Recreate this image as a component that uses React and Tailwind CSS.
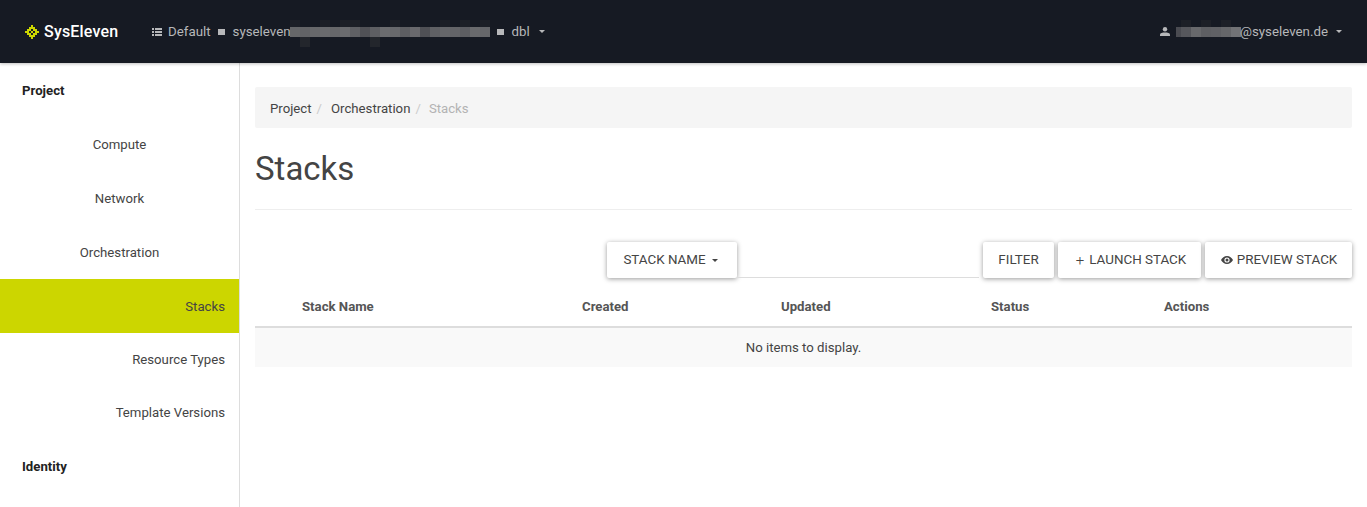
const roboto = "font-['Roboto',sans-serif]";

// pixelated blocks that cover the redacted project name and email
const projectBlocks = [
  { c: "#666769", top: true }, { c: "#626366", bottom: true }, { c: "#67686b" }, { c: "#6a6b6e", top: true },
  { c: "#66676a" }, { c: "#6b6c6f", top: true }, { c: "#5f6064", top: true }, { c: "#505156" },
  { c: "#5e5f63", bottom: true }, { c: "#6b6c6f" }, { c: "#68696c", top: true }, { c: "#5d5e62" },
  { c: "#69696d" }, { c: "#4f5055" }, { c: "#5f6064" }, { c: "#66676a", top: true },
  { c: "#636468" }, { c: "#5d5e62", top: true }, { c: "#696a6d" }, { c: "#66676a", top: true },
];
const emailBlocks = [
  { c: "#4a4b51", w: "5px" }, { c: "#56575c", top: true }, { c: "#68696c" }, { c: "#5e5f63", top: true },
  { c: "#606165" }, { c: "#66676a", top: true }, { c: "#727376" },
];

const Caret = ({ className = "" }) => (
  <span className={`inline-block w-0 h-0 border-x-[3px] border-x-transparent border-t-[3px] border-t-current ${className}`} />
);

const Redacted = ({ blocks }) => (
  <span className="flex">
    {blocks.map((block, i) => (
      <span key={i} className="flex flex-col" style={{ width: block.w || "10px" }}>
        <span className={`h-[7px] mt-[3px] ${block.top ? "bg-[#1d2027]" : ""}`} />
        <span className="h-[10px]" style={{ backgroundColor: block.c }} />
        <span className={`h-[10px] ${block.bottom ? "bg-[#23262c]" : ""}`} />
      </span>
    ))}
  </span>
);

// diamond of small squares with a few holes in it
const logoCells = [];
for (let r = -3; r <= 3; r++) {
  for (let c = -3; c <= 3; c++) {
    const dist = Math.abs(r) + Math.abs(c);
    if (dist <= 3 && dist !== 1) logoCells.push([c, r]);
  }
}

const Logo = () => (
  <svg width="14" height="14" viewBox="-7 -7 14 14" className="text-[#ccd600]">
    {logoCells.map(([c, r], i) => (
      <rect key={i} x={c * 2 - 1} y={r * 2 - 1} width="2" height="2" fill="currentColor" />
    ))}
  </svg>
);

const ListIcon = () => (
  <svg width="10" height="8" viewBox="0 0 10 8" fill="currentColor">
    <rect x="0" y="0" width="2" height="2" />
    <rect x="3" y="0" width="7" height="2" />
    <rect x="0" y="3" width="2" height="2" />
    <rect x="3" y="3" width="7" height="2" />
    <rect x="0" y="6" width="2" height="2" />
    <rect x="3" y="6" width="7" height="2" />
  </svg>
);

const UserIcon = () => (
  <svg width="10" height="9" viewBox="0 0 10 9" fill="currentColor">
    <circle cx="5" cy="2.2" r="2.2" />
    <path d="M0 9V7.4C0 6 2.5 5.4 5 5.4S10 6 10 7.4V9Z" />
  </svg>
);

const EyeIcon = () => (
  <svg width="12" height="8" viewBox="0 0 12 8" fill="currentColor">
    <path fillRule="evenodd" d="M6 0C3.3 0 1.1 1.7 0 4c1.1 2.3 3.3 4 6 4s4.9-1.7 6-4c-1.1-2.3-3.3-4-6-4Zm0 6.6A2.6 2.6 0 1 1 6 1.4a2.6 2.6 0 0 1 0 5.2Z" />
    <circle cx="6" cy="4" r="1.5" />
  </svg>
);

const Header = () => (
  <header className="h-[63px] bg-[#161a23] flex items-center text-[#b7b8ba] text-[13.3px] shadow-[0_1px_3px_rgba(0,0,0,0.25)] relative z-10">
    <div className="flex items-center pl-[25px] w-[152px]">
      <Logo />
      <span className="ml-[5px] text-white text-[16px] font-medium tracking-[0.2px]">SysEleven</span>
    </div>
    <div className="flex items-center">
      <ListIcon />
      <span className="ml-[6px]">Default</span>
      <span className="w-[7px] h-[6px] bg-[#b7b8ba] ml-[7px]" />
      <span className="ml-[8px] w-[57px]">syseleven</span>
      <Redacted blocks={projectBlocks} />
      <span className="w-[7px] h-[6px] bg-[#b7b8ba] ml-[7px]" />
      <span className="ml-[8px]">dbl</span>
      <Caret className="ml-[9px]" />
    </div>
    <div className="ml-auto flex items-center pr-[25px]">
      <UserIcon />
      <span className="ml-[6px]"><Redacted blocks={emailBlocks} /></span>
      <span className="-ml-px">@syseleven.de</span>
      <Caret className="ml-[8px]" />
    </div>
  </header>
);

const SideItem = ({ label, align = "center", active }) => (
  <div
    className={`flex items-center h-[54px] pt-[2px] text-[13.2px] text-[#444444] ${
      align === "right" ? "justify-end pr-[14px]" : "justify-center"
    } ${active ? "bg-[#ccd600]" : ""}`}
  >
    {label}
  </div>
);

const SideHeading = ({ label }) => (
  <div className="flex items-center h-[54px] pt-[2px] pl-[22px] text-[13.2px] font-bold text-[#222222]">{label}</div>
);

const Sidebar = () => (
  <aside className="w-[240px] h-[444px] shrink-0 border-r border-[#dddddd]">
    <SideHeading label="Project" />
    <SideItem label="Compute" />
    <SideItem label="Network" />
    <SideItem label="Orchestration" />
    <SideItem label="Stacks" align="right" active />
    <div className="-mt-px"><SideItem label="Resource Types" align="right" /></div>
    <div className="-mt-px"><SideItem label="Template Versions" align="right" /></div>
    <SideHeading label="Identity" />
  </aside>
);

const ActionButton = ({ children, className = "" }) => (
  <button className={`h-[36px] bg-white rounded-[2px] flex items-center justify-center text-[13.4px] text-[#444444] shadow-[0_1px_5px_rgba(0,0,0,0.4)] ${className}`}>
    {children}
  </button>
);

const Main = () => (
  <main className="flex-1 px-[15px] pt-[24px]">
    <div className="h-[41px] pt-[2px] bg-[#f5f5f5] rounded-[2px] flex items-center pl-[15px] text-[13.2px] text-[#444444]">
      <span>Project</span>
      <span className="ml-[5px] text-[#cccccc]">/</span>
      <span className="ml-[9px]">Orchestration</span>
      <span className="ml-[5px] text-[#cccccc]">/</span>
      <span className="ml-[8px] text-[#b3b3b3]">Stacks</span>
    </div>
    <h1 className="mt-[21px] text-[33px] leading-[40px] text-[#444444]">Stacks</h1>
    <div className="mt-[20px] border-t border-[#eeeeee]" />

    <div className="mt-[32px] flex items-start">
      <div className="ml-[352px] flex items-start">
        <ActionButton className="w-[130px] pr-[3px]">
          STACK NAME
          <Caret className="ml-[6px]" />
        </ActionButton>
        <div className="w-[242px] h-[36px] border-b border-[#dddddd]" />
      </div>
      <ActionButton className="ml-[4px] w-[71px]">FILTER</ActionButton>
      <ActionButton className="ml-[4px] w-[143px] pl-[3px]">
        <span className="mr-[5px] text-[15px] leading-none font-light">+</span>
        LAUNCH STACK
      </ActionButton>
      <ActionButton className="ml-[4px] w-[147px] pl-[1px]">
        <span className="mr-[4px]"><EyeIcon /></span>
        PREVIEW STACK
      </ActionButton>
    </div>

    <div className="mt-[10px] h-[40px] border-b-2 border-[#dddddd] grid grid-cols-[280px_199px_210px_173px_1fr] pl-[47px] items-center text-[13.2px] font-bold text-[#555555]">
      <span>Stack Name</span>
      <span>Created</span>
      <span>Updated</span>
      <span>Status</span>
      <span>Actions</span>
    </div>
    <div className="h-[39px] bg-[#f9f9f9] flex items-center justify-center text-[13.2px] text-[#444444]">
      No items to display.
    </div>
  </main>
);

export default function App() {
  return (
    <div className={`h-[507px] overflow-hidden bg-white ${roboto}`}>
      <Header />
      <div className="flex">
        <Sidebar />
        <Main />
      </div>
    </div>
  );
}
